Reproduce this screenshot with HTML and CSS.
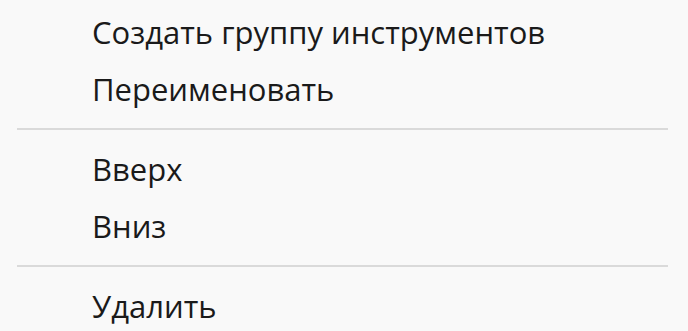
FILE: index.html
```html
<!DOCTYPE html>
<html lang="ru">
<head>
<meta charset="utf-8">
<title>Меню</title>
<link rel="stylesheet" href="styles.css">
</head>
<body>
<div class="menu">
  <div class="item">Создать группу инструментов</div>
  <div class="item">Переименовать</div>
  <div class="sep"></div>
  <div class="item">Вверх</div>
  <div class="item">Вниз</div>
  <div class="sep"></div>
  <div class="item">Удалить</div>
</div>
</body>
</html>
```
FILE: styles.css
```css
html, body {
  margin: 0;
  padding: 0;
  background: #f9f9f9;
}
.menu {
  display: flex;
  flex-direction: column;
  padding: 4px 20px 0 17px;
  font-family: "Open Sans", "Noto Sans", sans-serif;
  font-size: 31px;
  color: #1a1a1a;
}
.item {
  height: 57px;
  line-height: 57px;
  padding-left: 75px;
  white-space: nowrap;
}
.sep {
  height: 2px;
  background: #dadada;
  margin: 10px 0 11px;
}
```
